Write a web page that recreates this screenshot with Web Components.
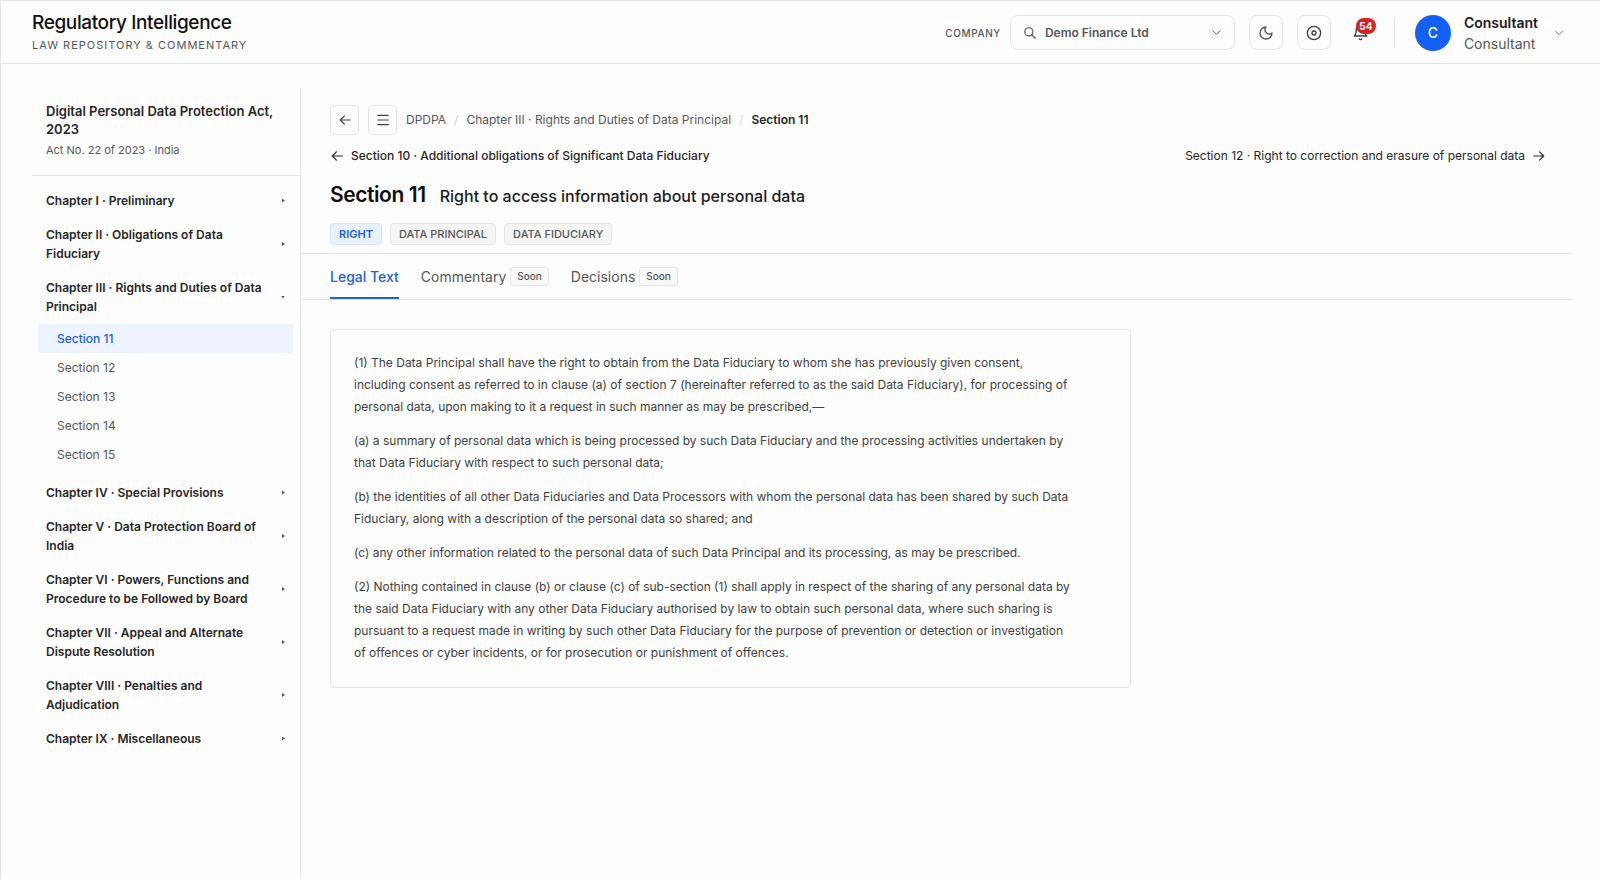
<!DOCTYPE html>
<html lang="en">
<head>
<meta charset="utf-8">
<meta name="viewport" content="width=device-width, initial-scale=1">
<title>Regulatory Intelligence</title>
<style>
  :root {
    --bg: #fdfdfd;
    --line: #e5e5e3;
    --ink: #0f0f0f;
    --strong: #262626;
    --text: #404040;
    --muted: #575757;
    --blue: #2160dd;
    --blue-soft: #edf4ff;
  }
  * { box-sizing: border-box; }
  body {
    margin: 0;
    background: var(--bg);
    color: var(--text);
    font-family: Inter, "Liberation Sans", sans-serif;
    font-size: 12px;
  }
</style>
</head>
<body>
<ri-shell>
  <ri-topbar slot="top"></ri-topbar>
  <act-sidebar slot="side">
    <span slot="title">Digital Personal Data Protection Act, 2023</span>
    <span slot="meta">Act No. 22 of 2023 · India</span>
    <act-chapter label="Chapter I · Preliminary"></act-chapter>
    <act-chapter label="Chapter II · Obligations of Data Fiduciary"></act-chapter>
    <act-chapter label="Chapter III · Rights and Duties of Data Principal" open>
      <section-link current>Section 11</section-link>
      <section-link>Section 12</section-link>
      <section-link>Section 13</section-link>
      <section-link>Section 14</section-link>
      <section-link>Section 15</section-link>
    </act-chapter>
    <act-chapter label="Chapter IV · Special Provisions"></act-chapter>
    <act-chapter label="Chapter V · Data Protection Board of India"></act-chapter>
    <act-chapter label="Chapter VI · Powers, Functions and Procedure to be Followed by Board"></act-chapter>
    <act-chapter label="Chapter VII · Appeal and Alternate Dispute Resolution"></act-chapter>
    <act-chapter label="Chapter VIII · Penalties and Adjudication"></act-chapter>
    <act-chapter label="Chapter IX · Miscellaneous"></act-chapter>
  </act-sidebar>

  <section-header>
    <span slot="prev">Section 10 · Additional obligations of Significant Data Fiduciary</span>
    <span slot="next">Section 12 · Right to correction and erasure of personal data</span>
    <span slot="number">Section 11</span>
    <span slot="title">Right to access information about personal data</span>
    <ri-tag slot="tags" tone="blue">RIGHT</ri-tag>
    <ri-tag slot="tags">DATA PRINCIPAL</ri-tag>
    <ri-tag slot="tags">DATA FIDUCIARY</ri-tag>
  </section-header>

  <ri-tabs>
    <ri-tab selected>Legal Text</ri-tab>
    <ri-tab soon>Commentary</ri-tab>
    <ri-tab soon>Decisions</ri-tab>
  </ri-tabs>

  <legal-text>
    <p>(1) The Data Principal shall have the right to obtain from the Data Fiduciary to whom she has previously given consent, including consent as referred to in clause (a) of section 7 (hereinafter referred to as the said Data Fiduciary), for processing of personal data, upon making to it a request in such manner as may be prescribed,—</p>
    <p>(a) a summary of personal data which is being processed by such Data Fiduciary and the processing activities undertaken by that Data Fiduciary with respect to such personal data;</p>
    <p>(b) the identities of all other Data Fiduciaries and Data Processors with whom the personal data has been shared by such Data Fiduciary, along with a description of the personal data so shared; and</p>
    <p>(c) any other information related to the personal data of such Data Principal and its processing, as may be prescribed.</p>
    <p>(2) Nothing contained in clause (b) or clause (c) of sub-section (1) shall apply in respect of the sharing of any personal data by the said Data Fiduciary with any other Data Fiduciary authorised by law to obtain such personal data, where such sharing is pursuant to a request made in writing by such other Data Fiduciary for the purpose of prevention or detection or investigation of offences or cyber incidents, or for prosecution or punishment of offences.</p>
  </legal-text>
</ri-shell>

<script>
const RESET = `*{box-sizing:border-box}
  button,select{font:inherit;color:inherit;background:none;border:0;margin:0;padding:0;cursor:pointer}
  a{color:inherit;text-decoration:none}`;

function define(name, css, html, setup) {
  const tpl = document.createElement('template');
  tpl.innerHTML = `<style>${RESET}${css}</style>${html}`;
  customElements.define(name, class extends HTMLElement {
    connectedCallback() {
      if (this.shadowRoot) return;
      const root = this.attachShadow({ mode: 'open' });
      root.append(tpl.content.cloneNode(true));
      if (setup) setup(this, root);
    }
  });
}

/* Stroke icons on a 24-unit grid */
const ICONS = {
  search: '<circle cx="10" cy="10" r="7"/><path d="m21 21-6-6"/>',
  down: '<path d="m4 8 8 8 8-8"/>',
  moon: '<path d="M12 3a6.4 6.4 0 0 0 9 9 9 9 0 1 1-9-9Z"/>',
  disc: '<circle cx="12" cy="12" r="10"/><circle cx="12" cy="12" r="3"/>',
  bell: '<path d="M6 8a6 6 0 0 1 12 0c0 7 3 9 3 9H3s3-2 3-9"/><path d="M10.3 21a1.94 1.94 0 0 0 3.4 0"/>',
  left: '<path d="M21 12H4"/><path d="m11 5-7 7 7 7"/>',
  right: '<path d="M3 12h17"/><path d="m13 5 7 7-7 7"/>',
  menu: '<path d="M3 4h18M3 12h18M3 20h18"/>'
};
define('ri-icon',
  `:host{display:block;flex:none;width:14px;height:14px}
   svg{display:block;width:100%;height:100%;fill:none;stroke:currentColor;stroke-width:2;stroke-linecap:round;stroke-linejoin:round}`,
  `<svg viewBox="0 0 24 24" aria-hidden="true"></svg>`,
  (el, root) => { root.querySelector('svg').innerHTML = ICONS[el.getAttribute('name')]; });

define('ri-shell',
  `:host{display:flex;flex-direction:column;min-height:100vh;border-top:1px solid var(--line);border-left:1px solid var(--line)}
   .body{display:flex;flex:1;padding:24px 28px 0 31px}
   main{flex:1;min-width:0}`,
  `<slot name="top"></slot><div class="body"><slot name="side"></slot><main><slot></slot></main></div>`);

define('ri-topbar',
  `:host{display:block;border-bottom:1px solid var(--line)}
   header{display:flex;align-items:center;justify-content:space-between;height:62px;padding:1px 36px 0 31px}
   h1{margin:0;font-size:19px;line-height:24px;font-weight:500;letter-spacing:-0.02em;color:var(--ink)}
   .sub{margin:0;font-size:11px;line-height:20px;letter-spacing:1px;color:var(--muted)}
   .tools{display:flex;align-items:center}
   .label{font-size:10px;font-weight:500;letter-spacing:.06em;color:var(--muted);margin-right:9px}
   .picker{display:flex;align-items:center;width:225px;height:35px;border:1px solid var(--line);border-radius:8px;padding:0 12px;color:var(--muted)}
   select{appearance:none;flex:1;min-width:0;height:33px;padding-left:8px;font-weight:600;outline:0}
   .picker ri-icon[name=down]{width:11px;height:11px;pointer-events:none}
   .square{display:grid;place-items:center;width:34px;height:35px;margin-left:14px;border:1px solid var(--line);border-radius:8px;color:var(--muted)}
   .square ri-icon{width:16px;height:16px}
   .square ri-icon[name=disc]{color:#404040}
   .bell{position:relative;display:grid;place-items:center;width:34px;height:35px;margin-left:13px;color:var(--text)}
   .bell ri-icon{width:17px;height:17px}
   .count{position:absolute;left:12px;top:3px;min-width:20px;height:16px;border-radius:8px;background:#dc2020;color:#fff;font-size:10px;font-weight:700;line-height:16px;text-align:center}
   .rule{width:1px;height:30px;background:var(--line);margin:0 20px 0 16px}
   .user{display:flex;align-items:center;text-align:left}
   .avatar{display:grid;place-items:center;width:36px;height:36px;border-radius:50%;background:#1260f5;color:#fff;font-size:14px;font-weight:500;margin-right:13px}
   .who{display:grid;font-size:14px;line-height:21px;color:var(--muted);margin-right:16px}
   .who b{font-weight:600;color:#1c1c1c}
   .user > ri-icon{width:10px;height:10px;color:var(--muted)}`,
  `<header>
     <div><h1>Regulatory Intelligence</h1><p class="sub">LAW REPOSITORY &amp; COMMENTARY</p></div>
     <div class="tools">
       <label class="label" for="company">COMPANY</label>
       <div class="picker"><ri-icon name="search"></ri-icon>
         <select id="company"><option>Demo Finance Ltd</option></select>
         <ri-icon name="down"></ri-icon></div>
       <button class="square" aria-label="Dark mode"><ri-icon name="moon"></ri-icon></button>
       <button class="square" aria-label="Focus"><ri-icon name="disc"></ri-icon></button>
       <button class="bell" aria-label="Notifications"><ri-icon name="bell"></ri-icon><span class="count">54</span></button>
       <span class="rule"></span>
       <button class="user"><span class="avatar">C</span><span class="who"><b>Consultant</b><span>Consultant</span></span><ri-icon name="down"></ri-icon></button>
     </div>
   </header>`);

define('act-sidebar',
  `:host{display:block;flex:none;width:269px;border-right:1px solid var(--line)}
   header{padding:14px 16px 16px 14px;border-bottom:1px solid var(--line)}
   h2{margin:0;font-size:13px;line-height:18px;font-weight:600;color:var(--strong)}
   p{margin:3px 0 0;font-size:11px;line-height:18px;color:var(--muted)}
   nav{display:grid;gap:1px;padding:8px 7px 24px 6px}`,
  `<header><h2><slot name="title"></slot></h2><p><slot name="meta"></slot></p></header><nav aria-label="Chapters"><slot></slot></nav>`);

define('act-chapter',
  `:host{display:block}
   button{display:flex;align-items:center;justify-content:space-between;gap:8px;width:100%;padding:7px 8px;text-align:left;font-weight:600;line-height:19px;color:var(--strong)}
   .label{max-width:224px}
   i{flex:none;width:3px;height:4px;background:var(--muted);clip-path:polygon(0 0,100% 50%,0 100%)}
   :host([open]) i{width:4px;height:3px;clip-path:polygon(0 0,100% 0,50% 100%)}
   .items{display:none;padding:1px 0 6px}
   :host([open]) .items{display:block}`,
  `<button><span class="label"></span><i></i></button><div class="items"><slot></slot></div>`,
  (el, root) => {
    const button = root.querySelector('button');
    const sync = () => button.setAttribute('aria-expanded', el.hasAttribute('open'));
    root.querySelector('.label').textContent = el.getAttribute('label');
    button.addEventListener('click', () => { el.toggleAttribute('open'); sync(); });
    sync();
  });

define('section-link',
  `:host{display:block}
   a{display:block;padding:5px 19px;line-height:19px;color:var(--muted);border-radius:3px}
   :host([current]) a{background:var(--blue-soft);color:var(--blue);font-weight:500}`,
  `<a href="#"><slot></slot></a>`);

define('section-header',
  `:host{display:block;padding:17px 26px 8px 29px;border-bottom:1px solid var(--line)}
   .crumbs,.crumbs nav,.pager,.pager a,.title,.tags{display:flex;align-items:center}
   .crumbs{gap:9px}
   .crumbs button{display:grid;place-items:center;width:29px;height:30px;border:1px solid var(--line);border-radius:4px;color:var(--text)}
   .crumbs nav{gap:8px;line-height:20px;color:var(--muted)}
   .crumbs i{font-style:normal;color:#d4d4d4}
   .crumbs b{font-weight:600;color:var(--strong)}
   .pager{justify-content:space-between;margin-top:11px;line-height:20px;color:var(--strong)}
   .pager a{gap:7px;font-weight:500}
   .pager a + a{font-weight:400}
   .title{align-items:baseline;gap:14px;margin-top:15px;color:var(--ink)}
   h2,h3{margin:0;line-height:28px}
   h2{font-size:21px;font-weight:600;letter-spacing:-0.02em}
   h3{font-size:16px;font-weight:500;color:#1c1c1c}
   .tags{gap:8px;margin-top:13px}`,
  `<div class="crumbs">
     <button aria-label="Back"><ri-icon name="left"></ri-icon></button>
     <button aria-label="Contents"><ri-icon name="menu"></ri-icon></button>
     <nav aria-label="Breadcrumb"><a href="#">DPDPA</a><i>/</i><a href="#">Chapter III · Rights and Duties of Data Principal</a><i>/</i><b>Section 11</b></nav>
   </div>
   <div class="pager">
     <a href="#"><ri-icon name="left"></ri-icon><slot name="prev"></slot></a>
     <a href="#"><slot name="next"></slot><ri-icon name="right"></ri-icon></a>
   </div>
   <div class="title"><h2><slot name="number"></slot></h2><h3><slot name="title"></slot></h3></div>
   <div class="tags"><slot name="tags"></slot></div>`);

define('ri-tag',
  `:host{display:block;padding:0 8px;border:1px solid var(--line);border-radius:4px;background:#f5f5f4;color:var(--muted);font-size:11px;line-height:20px;font-weight:500}
   :host([tone=blue]){background:#e8f1ff;border-color:#d5e4fb;color:var(--blue);font-weight:600}`,
  `<slot></slot>`);

define('ri-tabs',
  `:host{display:block;border-bottom:1px solid var(--line);padding:0 29px}
   div{display:flex;gap:22px}`,
  `<div role="tablist"><slot></slot></div>`);

define('ri-tab',
  `:host{display:block}
   button{display:flex;align-items:center;gap:4px;height:45px;padding-top:2px;border-bottom:2px solid transparent;font-size:14px;color:var(--muted)}
   :host([selected]) button{color:var(--blue);border-color:var(--blue);font-weight:500}
   small{display:none;padding:0 6px;border:1px solid var(--line);border-radius:3px;background:#f8f8f7;font-size:10px;line-height:17px;font-weight:500}
   :host([soon]) small{display:block}`,
  `<button role="tab"><span><slot></slot></span><small>Soon</small></button>`,
  (el, root) => root.querySelector('button').setAttribute('aria-selected', el.hasAttribute('selected')));

define('legal-text',
  `:host{display:block;padding:29px 29px 32px}
   article{display:grid;gap:12px;max-width:801px;padding:22px 24px 23px 23px;border:1px solid var(--line);border-radius:4px}
   ::slotted(p){margin:0;max-width:716px;line-height:22px;color:var(--text)}`,
  `<article><slot></slot></article>`);
</script>
</body>
</html>
